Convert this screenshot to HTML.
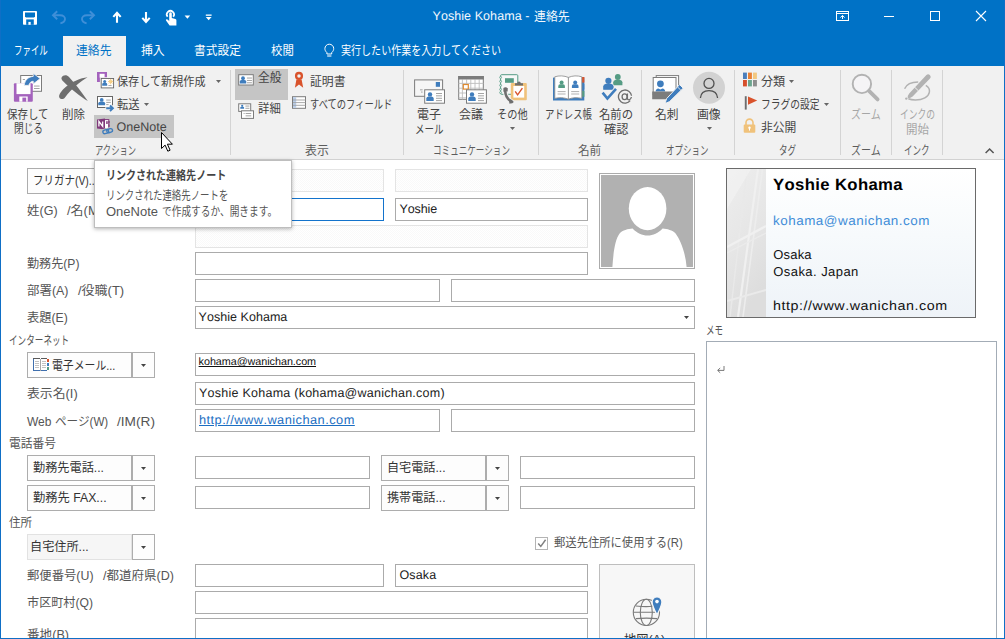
<!DOCTYPE html>
<html lang="ja"><head><meta charset="utf-8"><title>Yoshie Kohama - 連絡先</title>
<style>
html,body{margin:0;padding:0}
body{width:1005px;height:639px;overflow:hidden;position:relative;background:#fff;font-family:"Liberation Sans","Noto Sans CJK JP",sans-serif;color:#222}
.bx,.jt,.ic,.lt{position:absolute;box-sizing:border-box}
.jt,.ic{overflow:visible;display:block}
.jt text{font-family:"Liberation Sans","Noto Sans CJK JP",sans-serif;font-size:250px}
.lt{white-space:pre;line-height:1;transform-origin:0 50%;text-rendering:geometricPrecision;font-kerning:none}
.titlebar{background:#0072C6}
.tabsel{background:#F1F1F1}
.ribbon{background:#F1F1F1;border-bottom:1px solid #D2D2D2}
.sep{background:#D4D4D4}
.hot{background:#C5C5C5}
.fld{background:#fff;border:1px solid #ABABAB}
.fld.focus{border-color:#1373CC}
.fld.dis{border-color:#E4E4E4;background:repeating-conic-gradient(#FFFFFF 0 25%,#F9F9F9 0 50%) 0 0/2px 2px}
.btn{background:#FDFDFD;border:1px solid #ADADAD}
.btndis{background:#F6F6F6;border-color:#E2E2E2}
.mapbtn{background:#F7F7F7;border-color:#BEBEBE}
.photo{border:1px solid #ABABAB;background:#fff;padding:1px}
.photo svg{display:block}
.bcard{border:1px solid #6A6A6A;background:linear-gradient(180deg,#FFFFFF 0%,#F7FAFC 45%,#EEF3F8 100%)}
.memo{border:1px solid #A3ACB6;background:#fff}
.tip{background:#fff;border:1px solid #BEBEBE;box-shadow:0 1px 4px rgba(0,0,0,.30)}
.edge{background:#0F6FC6}
</style></head>
<body>
<header>
<div class="bx titlebar" style="left:0px;top:0px;width:1005px;height:66px;">
</div>
<svg class="ic" style="left:22px;top:10px" width="16" height="16" viewBox="22 10 16 16">
<rect x="23" y="10.9" width="14" height="13.8" rx=".8" fill="#fff"/>
<path d="M25 12.6 H35 V16.4 L34 17.5 H26 L25 16.4 Z" fill="#0072C6"/>
<rect x="26.2" y="19.4" width="7.6" height="5.4" fill="#0072C6"/>
<rect x="28.4" y="21.9" width="2.3" height="2.9" fill="#fff"/>
</svg>
<svg class="ic" style="left:51px;top:9px" width="16" height="16" viewBox="51 9 16 16">
<path d="M57.2 11.2 L53 15.2 L57.2 19.2" fill="none" stroke="#3F8FD8" stroke-width="1.9"/>
<path d="M53.4 15.2 H60 C63.4 15.2 65.2 17 65 19.2 C64.8 21.4 63.2 22.8 60.4 23.4" fill="none" stroke="#3F8FD8" stroke-width="1.9"/>
</svg>
<svg class="ic" style="left:80px;top:9px" width="16" height="16" viewBox="80 9 16 16">
<path d="M89.8 11.2 L94 15.2 L89.8 19.2" fill="none" stroke="#3F8FD8" stroke-width="1.9"/>
<path d="M93.6 15.2 H87 C83.6 15.2 81.8 17 82 19.2 C82.2 21.4 83.8 22.8 86.6 23.4" fill="none" stroke="#3F8FD8" stroke-width="1.9"/>
</svg>
<svg class="ic" style="left:111px;top:11px" width="12" height="13" viewBox="111 11 12 13">
<path d="M117 22.8 V13 M113.3 16.9 L117 12.9 L120.7 16.9" fill="none" stroke="#fff" stroke-width="2.1"/>
</svg>
<svg class="ic" style="left:140px;top:11px" width="12" height="13" viewBox="140 11 12 13">
<path d="M146 12 V21.8 M142.3 17.9 L146 21.9 L149.7 17.9" fill="none" stroke="#fff" stroke-width="2.1"/>
</svg>
<svg class="ic" style="left:164px;top:9px" width="14" height="17" viewBox="164 9 14 17">
<path d="M167.6 16.8 A3.6 3.6 0 1 1 173.2 16.8" fill="none" stroke="#fff" stroke-width="1.7"/>
<path d="M169.2 13.6 a1.3 1.3 0 0 1 2.6 0 V18 l3.6 .9 q1 .3 1 1.4 V25.4 H169.6 L166 20.6 q-.5-1 .6-1.3 q.9-.1 1.5 .6 l1.1 1.2 Z" fill="#fff"/>
</svg>
<svg class="ic" style="left:184px;top:15px" width="7" height="5" viewBox="184 15 7 5">
<path d="M184.6 15.6 h5.6 l-2.8 3.2 z" fill="#fff"/>
</svg>
<svg class="ic" style="left:205px;top:13px" width="8" height="8" viewBox="205 13 8 8">
<rect x="205.8" y="14.5" width="5.8" height="1.3" fill="#fff"/>
<path d="M205.8 17 h5.8 l-2.9 3.2 z" fill="#fff"/>
</svg>
<svg class="ic" style="left:835px;top:10px" width="15" height="12" viewBox="835 10 15 12">
<rect x="836.5" y="11.5" width="12" height="9" fill="none" stroke="#fff" stroke-width="1"/>
<path d="M836 13.5 H849 M842.5 19 V15.6 M840.4 17.6 L842.5 15.4 L844.6 17.6" fill="none" stroke="#fff" stroke-width="1"/>
</svg>
<svg class="ic" style="left:883px;top:15px" width="12" height="3" viewBox="883 15 12 3">
<rect x="884" y="16" width="10" height="1" fill="#fff"/>
</svg>
<svg class="ic" style="left:929px;top:10px" width="12" height="12" viewBox="929 10 12 12">
<rect x="930.5" y="11.5" width="9" height="9" fill="none" stroke="#fff" stroke-width="1"/>
</svg>
<svg class="ic" style="left:975px;top:10px" width="12" height="12" viewBox="975 10 12 12">
<path d="M976 11 L986 21 M986 11 L976 21" stroke="#fff" stroke-width="1.1"/>
</svg>
<svg class="ic" style="left:323px;top:42px" width="12" height="16" viewBox="323 42 12 16">
<path d="M326.9 52.6 C325.4 51.2 324.9 50 324.9 48.6 A4.4 4.4 0 0 1 333.7 48.6 C333.7 50 333.2 51.2 331.7 52.6 V54 H326.9 Z" fill="none" stroke="#fff" stroke-width="1"/>
<path d="M327.2 56 H331.4" stroke="#fff" stroke-width="1.1"/>
</svg>
<span class="lt" style="left:432.5px;top:10.2px;font-size:12.50px;color:#F3F8FD;letter-spacing:0.07px;">Yoshie Kohama -</span>
<svg class="jt" role="img" aria-label="連絡先" style="left:534.0px;top:8.8px" width="35.7" height="16.8" viewBox="0 -250.0 743.7 350.0" fill="#F3F8FD">
<title>連絡先</title>
<text x="0" y="0" textLength="743.7" lengthAdjust="spacingAndGlyphs">連絡先</text>
</svg>
<nav>
<div class="bx tabsel" style="left:63px;top:36px;width:63px;height:30px;">
</div>
<svg class="jt" role="img" aria-label="ファイル" style="left:13.8px;top:42.9px" width="33.8" height="16.8" viewBox="0 -250.0 704.2 350.0" fill="#fff">
<title>ファイル</title>
<text x="0" y="0" textLength="704.2" lengthAdjust="spacingAndGlyphs">ファイル</text>
</svg>
<svg class="jt" role="img" aria-label="連絡先" style="left:76.0px;top:42.9px" width="35.6" height="16.8" viewBox="0 -250.0 741.7 350.0" fill="#0072C6">
<title>連絡先</title>
<text x="0" y="0" textLength="741.7" lengthAdjust="spacingAndGlyphs">連絡先</text>
</svg>
<svg class="jt" role="img" aria-label="挿入" style="left:141.0px;top:42.9px" width="23.7" height="16.8" viewBox="0 -250.0 493.7 350.0" fill="#fff">
<title>挿入</title>
<text x="0" y="0" textLength="493.7" lengthAdjust="spacingAndGlyphs">挿入</text>
</svg>
<svg class="jt" role="img" aria-label="書式設定" style="left:194.3px;top:42.9px" width="46.9" height="16.8" viewBox="0 -250.0 977.1 350.0" fill="#fff">
<title>書式設定</title>
<text x="0" y="0" textLength="977.1" lengthAdjust="spacingAndGlyphs">書式設定</text>
</svg>
<svg class="jt" role="img" aria-label="校閲" style="left:271.2px;top:42.9px" width="22.8" height="16.8" viewBox="0 -250.0 475.0 350.0" fill="#fff">
<title>校閲</title>
<text x="0" y="0" textLength="475" lengthAdjust="spacingAndGlyphs">校閲</text>
</svg>
<svg class="jt" role="img" aria-label="実行したい作業を入力してください" style="left:341.0px;top:42.9px" width="160.0" height="16.8" viewBox="0 -250.0 3333.3 350.0" fill="#fff">
<title>実行したい作業を入力してください</title>
<text x="0" y="0" textLength="3333.3" lengthAdjust="spacingAndGlyphs">実行したい作業を入力してください</text>
</svg>
</nav>
</header>
<section class="ribbonwrap">
<div class="bx ribbon" style="left:0px;top:66px;width:1005px;height:94px;">
</div>
<div class="bx sep" style="left:230.1px;top:70px;width:1px;height:85px;">
</div>
<div class="bx sep" style="left:403px;top:70px;width:1px;height:85px;">
</div>
<div class="bx sep" style="left:538px;top:70px;width:1px;height:85px;">
</div>
<div class="bx sep" style="left:640.8px;top:70px;width:1px;height:85px;">
</div>
<div class="bx sep" style="left:734px;top:70px;width:1px;height:85px;">
</div>
<div class="bx sep" style="left:839.9px;top:70px;width:1px;height:85px;">
</div>
<div class="bx sep" style="left:890.8px;top:70px;width:1px;height:85px;">
</div>
<div class="bx sep" style="left:941.8px;top:70px;width:1px;height:85px;">
</div>
<div class="bx hot" style="left:94px;top:115px;width:80px;height:22.6px;">
</div>
<div class="bx hot" style="left:235.2px;top:69.3px;width:52.6px;height:30.4px;">
</div>
<svg class="ic" style="left:13px;top:73px" width="30" height="30" viewBox="13 73 30 30">
<rect x="20.7" y="75.5" width="20.8" height="15.8" fill="#fff" stroke="#7C7C7C" stroke-width="1"/>
<rect x="34" y="85.6" width="5.6" height=".9" fill="#9A9A9A"/>
<rect x="34" y="88" width="5.6" height=".9" fill="#9A9A9A"/>
<rect x="22.8" y="79" width="2.2" height=".9" fill="#9A9A9A"/>
<rect x="13.9" y="83.2" width="18.9" height="18.5" rx="1" fill="#A463BD"/>
<rect x="16.5" y="83.2" width="14" height="10.9" fill="#fff"/>
<rect x="19.3" y="96.5" width="8.4" height="5.2" fill="#fff"/>
<rect x="22.4" y="97.6" width="3.8" height="4.1" fill="#A463BD"/>
<path d="M24.2 85.4 C24.8 79.8 28.4 76.8 33.2 76.4 V73.2 L40.2 78.6 L33.2 84 V81.2 C31 81.4 29.4 82.8 28.8 85.4 Z" fill="#3F7DBD" stroke="#F1F1F1" stroke-width=".9"/>
</svg>
<svg class="ic" style="left:58px;top:74px" width="31" height="29" viewBox="58 74 31 29">
<path d="M61.6 77.6 C63 74.8 66.8 74.6 69 77 C74.6 83.2 81 91 87.8 101 C80 96.6 70.8 88.8 63.6 81.8 C62 80.4 61 79 61.6 77.6 Z" fill="#6E6E6E"/>
<path d="M87.6 77.2 C80.2 81.2 71.4 89 65 97.4 C63.4 99.6 59.8 99.6 59.2 97 C58.6 94.4 61.6 90.6 65.4 87.2 C72 81.6 80.4 78 87.6 77.2 Z" fill="#6E6E6E"/>
</svg>
<svg class="ic" style="left:96px;top:71px" width="19" height="18" viewBox="96 71 19 18">
<rect x="97" y="72" width="10" height="10" fill="#A463BD"/>
<rect x="99.6" y="73.8" width="5" height="3.8" fill="#fff"/>
<rect x="101.2" y="78.5" width="12.4" height="9.4" fill="#fff" stroke="#F1F1F1" stroke-width="2.6"/>
<rect x="101.2" y="78.5" width="12.4" height="9.4" fill="#fff" stroke="#666" stroke-width=".9"/>
<circle cx="104.7" cy="81.4" r="1.5" fill="#3F7DBD"/>
<path d="M102.2 85.625 V84.085 Q102.2 83.161 103.575 82.825 H105.825 Q107.2 83.161 107.2 84.085 V85.625 Z" fill="#3F7DBD"/>
<path d="M110.7 78.9 v5.4 M108 81.6 h5.4 M108.8 79.7 l3.8 3.8 M112.6 79.7 l-3.8 3.8" stroke="#F0B040" stroke-width=".65"/>
<circle cx="110.7" cy="81.6" r="1" fill="#F6D38A"/>
<rect x="108.4" y="85.2" width="3.2" height=".8" fill="#9A9A9A"/>
</svg>
<svg class="ic" style="left:96px;top:95px" width="19" height="18" viewBox="96 95 19 18">
<rect x="97.5" y="96.5" width="15" height="11" fill="#fff" stroke="#666" stroke-width="1"/>
<circle cx="101.7" cy="99.9" r="1.9" fill="#3F7DBD"/>
<path d="M98.3 105.305 V103.325 Q98.3 102.137 100.17 101.705 H103.23 Q105.1 102.137 105.1 103.325 V105.305 Z" fill="#3F7DBD"/>
<rect x="106.2" y="99.6" width="4.6" height=".9" fill="#9A9A9A"/>
<rect x="106.2" y="101.9" width="4.6" height=".9" fill="#9A9A9A"/>
<rect x="106.2" y="104.2" width="2.4" height=".9" fill="#9A9A9A"/>
<path d="M105.4 108.3 H112.6 M110 105.3 L113.1 108.3 L110 111.3" fill="none" stroke="#F1F1F1" stroke-width="3.6"/>
<path d="M106.2 108.3 H112.6 M110 105.5 L112.9 108.3 L110 111.1" fill="none" stroke="#3F7DBD" stroke-width="1.9"/>
</svg>
<svg class="ic" style="left:96px;top:117px" width="19" height="18" viewBox="96 117 19 18">
<rect x="104" y="119.6" width="4.8" height="9" fill="#fff" stroke="#80397B" stroke-width="1"/>
<rect x="106.2" y="121.2" width="1.5" height="2.8" fill="#80397B"/>
<rect x="108.4" y="121" width="1.2" height="2.4" fill="#80397B"/>
<rect x="108.4" y="124.4" width="1.2" height="2.4" fill="#80397B"/>
<path d="M97 119.6 L105 118.4 V129.6 L97 128.4 Z" fill="#80397B"/>
<path d="M98.9 126.4 V121.4 L102.7 126.4 V121.4" fill="none" stroke="#fff" stroke-width="1.25"/>
<g fill="none" stroke="#C5C5C5" stroke-width="3.2" transform="rotate(-14 107.6 131.2)">
<rect x="102.8" y="129.4" width="5.8" height="3.6" rx="1.8"/>
<rect x="106.8" y="129.4" width="5.8" height="3.6" rx="1.8"/>
</g>
<g fill="none" stroke="#3F7DBD" stroke-width="1.4" transform="rotate(-14 107.6 131.2)">
<rect x="102.8" y="129.4" width="5.8" height="3.6" rx="1.8"/>
<rect x="106.8" y="129.4" width="5.8" height="3.6" rx="1.8"/>
</g>
</svg>
<svg class="ic" style="left:237px;top:73px" width="18" height="14" viewBox="237 73 18 14">
<rect x="238.7" y="74.7" width="14.6" height="10.3" fill="#fff" stroke="#7C7C7C" stroke-width="1"/>
<circle cx="243" cy="78.268" r="1.9" fill="#3F7DBD"/>
<path d="M239.77 83.463 V81.5985 Q239.77 80.4798 241.547 80.073 H244.453 Q246.23 80.4798 246.23 81.5985 V83.463 Z" fill="#3F7DBD"/>
<rect x="246.936" y="77.59" width="4.992" height="0.9" fill="#9A9A9A"/>
<rect x="246.936" y="79.963" width="4.992" height="0.9" fill="#9A9A9A"/>
<rect x="246.936" y="82.336" width="4.992" height="0.9" fill="#9A9A9A"/>
</svg>
<svg class="ic" style="left:237px;top:102px" width="18" height="18" viewBox="237 102 18 18">
<rect x="238.7" y="103.8" width="12" height="7.6" fill="#fff" stroke="#7C7C7C" stroke-width="1"/>
<circle cx="242.2" cy="105.8" r="1.1" fill="#3F7DBD"/>
<path d="M240.3 108.845 V107.745 Q240.3 107.085 241.345 106.845 H243.055 Q244.1 107.085 244.1 107.745 V108.845 Z" fill="#3F7DBD"/>
<rect x="245.4" y="105.6" width="4" height=".9" fill="#9A9A9A"/>
<rect x="245.4" y="107.8" width="4" height=".9" fill="#9A9A9A"/>
<rect x="241.5" y="110.8" width="12" height="7.6" fill="#fff" stroke="#7C7C7C" stroke-width="1"/>
<rect x="243.6" y="113" width="1" height=".9" fill="#9A9A9A"/>
<rect x="245.6" y="113" width="5.6" height=".9" fill="#9A9A9A"/>
<rect x="245.6" y="115.4" width="5.6" height=".9" fill="#9A9A9A"/>
</svg>
<svg class="ic" style="left:293px;top:71px" width="12" height="18" viewBox="293 71 12 18">
<path d="M296.4 79.6 L294.9 87.8 L299 84.6 L303.2 87.8 L301.6 79.6 Z" fill="#D9532C"/>
<circle cx="299" cy="75.9" r="2.9" fill="#F1F1F1" stroke="#D9532C" stroke-width="2.3"/>
</svg>
<svg class="ic" style="left:291px;top:95px" width="16" height="15" viewBox="291 95 16 15">
<rect x="292.5" y="96.7" width="13" height="11.6" fill="#fff" stroke="#7C7C7C" stroke-width="1"/>
<rect x="293" y="97.2" width="3.2" height="10.6" fill="#B9CDE8"/>
<path d="M293 100 H305.5 M293 102.6 H305.5 M293 105.3 H305.5" stroke="#A0A0A0" stroke-width=".9"/>
</svg>
<svg class="ic" style="left:413px;top:78px" width="33" height="27" viewBox="413 78 33 27">
<rect x="414.6" y="79.9" width="28" height="16.4" fill="#F6F6F6" stroke="#7C7C7C" stroke-width="1"/>
<rect x="435.8" y="82" width="4.2" height="4.8" fill="#3F7DBD"/>
<rect x="420" y="89.4" width="2.6" height=".9" fill="#9A9A9A"/>
<rect x="421" y="91.6" width="1.6" height=".9" fill="#9A9A9A"/>
<rect x="424.7" y="89.8" width="19.8" height="13.4" fill="#fff" stroke="#7C7C7C" stroke-width="1"/>
<circle cx="430" cy="94.4" r="2.2" fill="#3F7DBD"/>
<path d="M426.3 100.89 V98.47 Q426.3 97.018 428.335 96.49 H431.665 Q433.7 97.018 433.7 98.47 V100.89 Z" fill="#3F7DBD"/>
<rect x="436" y="93" width="6" height=".9" fill="#9A9A9A"/>
<rect x="436" y="95.4" width="6" height=".9" fill="#9A9A9A"/>
<rect x="436" y="97.8" width="6" height=".9" fill="#9A9A9A"/>
<rect x="436" y="100.2" width="6" height=".9" fill="#9A9A9A"/>
</svg>
<svg class="ic" style="left:457px;top:75px" width="31" height="30" viewBox="457 75 31 30">
<rect x="458.7" y="76.5" width="24.6" height="22.8" fill="#fff" stroke="#7C7C7C" stroke-width="1"/>
<path d="M462.4 79.6 V99.4" stroke="#BDBDBD" stroke-width=".9"/>
<path d="M466.6 79.6 V99.4" stroke="#BDBDBD" stroke-width=".9"/>
<path d="M470.8 79.6 V99.4" stroke="#BDBDBD" stroke-width=".9"/>
<path d="M475 79.6 V99.4" stroke="#BDBDBD" stroke-width=".9"/>
<path d="M479.2 79.6 V99.4" stroke="#BDBDBD" stroke-width=".9"/>
<path d="M458.6 83.4 H483.4" stroke="#BDBDBD" stroke-width=".9"/>
<path d="M458.6 88.2 H483.4" stroke="#BDBDBD" stroke-width=".9"/>
<path d="M458.6 93 H483.4" stroke="#BDBDBD" stroke-width=".9"/>
<path d="M458.6 97.8 H483.4" stroke="#BDBDBD" stroke-width=".9"/>
<rect x="458.2" y="76" width="25.6" height="3.5" fill="#7C7C7C"/>
<rect x="463.3" y="84.5" width="5" height="4.6" fill="#fff" stroke="#E08A2E" stroke-width="1.2"/>
<rect x="466.5" y="89.8" width="19.9" height="13.4" fill="#fff" stroke="#7C7C7C" stroke-width="1"/>
<circle cx="472" cy="94.4" r="2.2" fill="#3F7DBD"/>
<path d="M468.3 100.89 V98.47 Q468.3 97.018 470.335 96.49 H473.665 Q475.7 97.018 475.7 98.47 V100.89 Z" fill="#3F7DBD"/>
<rect x="478" y="93" width="6" height=".9" fill="#9A9A9A"/>
<rect x="478" y="95.4" width="6" height=".9" fill="#9A9A9A"/>
<rect x="478" y="97.8" width="6" height=".9" fill="#9A9A9A"/>
<rect x="478" y="100.2" width="6" height=".9" fill="#9A9A9A"/>
</svg>
<svg class="ic" style="left:498px;top:73px" width="30" height="31" viewBox="498 73 30 31">
<rect x="500.6" y="74.7" width="17.2" height="19.6" rx="1" fill="#F8F8F8" stroke="#559C84" stroke-width="1"/>
<rect x="505" y="78.2" width="8.8" height="4.6" fill="#559C84"/>
<circle cx="500.6" cy="77.4" r="1" fill="#F1F1F1" stroke="#559C84" stroke-width=".7"/>
<circle cx="500.6" cy="81.4" r="1" fill="#F1F1F1" stroke="#559C84" stroke-width=".7"/>
<circle cx="500.6" cy="85.4" r="1" fill="#F1F1F1" stroke="#559C84" stroke-width=".7"/>
<circle cx="500.6" cy="89.4" r="1" fill="#F1F1F1" stroke="#559C84" stroke-width=".7"/>
<circle cx="500.6" cy="92.6" r="1" fill="#F1F1F1" stroke="#559C84" stroke-width=".7"/>
<rect x="510.8" y="82.9" width="16" height="17.4" rx="1" fill="#F0C27B"/>
<rect x="513.4" y="86" width="10.8" height="11.6" fill="#fff"/>
<path d="M515 85.4 V83.2 H517.2 A1.8 1.8 0 0 1 520.8 83.2 H523 V85.4 Z" fill="#6E6E6E"/>
<path d="M515.2 91.4 L517.6 94.8 L522.4 88.2" fill="none" stroke="#D9532C" stroke-width="1.4"/>
<path d="M505.4 89.4 C504.6 94.6 507.4 99.6 511.6 101.6" fill="none" stroke="#F1F1F1" stroke-width="4.6" stroke-linecap="round"/>
<path d="M505.4 89.4 C504.6 94.6 507.4 99.6 511.6 101.6" fill="none" stroke="#6E6E6E" stroke-width="2.6"/>
<path d="M503.4 88 Q505.6 86.6 507.8 88.2 L507.6 91.6 Q505.4 91 503.4 91.8 Z M509.6 99 Q512.4 99.6 513.8 102 Q512 104.2 509.2 103.4 Z" fill="#6E6E6E"/>
</svg>
<svg class="ic" style="left:552px;top:74px" width="34" height="28" viewBox="552 74 34 28">
<path d="M553 77.6 H584.3 V100.5 H553 Z" fill="#3F7DBD"/>
<rect x="581.6" y="77" width="2.8" height="5.6" fill="#D9532C"/>
<rect x="581.6" y="83.6" width="2.8" height="6" fill="#3F7DBD"/>
<rect x="581.6" y="90.8" width="2.8" height="6" fill="#559C84"/>
<path d="M554.8 76.8 C559 75.4 564 75.6 568.4 77.4 C572.6 75.6 577.4 75.4 581.8 76.8 V98.4 C577.4 97.2 572.6 97.4 568.4 99.2 C564 97.4 559 97.2 554.8 98.4 Z" fill="#fff" stroke="#8A8A8A" stroke-width=".8"/>
<path d="M568.4 77.4 V99.2" stroke="#8A8A8A" stroke-width=".9"/>
<circle cx="561.6" cy="82.4" r="2" fill="#559C84"/>
<path d="M558.3 87.9 V85.92 Q558.3 84.732 560.115 84.3 H563.085 Q564.9 84.732 564.9 85.92 V87.9 Z" fill="#559C84"/>
<circle cx="575.2" cy="82.4" r="2" fill="#3F7DBD"/>
<path d="M571.9 87.9 V85.92 Q571.9 84.732 573.715 84.3 H576.685 Q578.5 84.732 578.5 85.92 V87.9 Z" fill="#3F7DBD"/>
<path d="M557.6 91.6 H565.6 M557.6 94 H565.6 M571.2 91.6 H579.2 M571.2 94 H579.2" stroke="#A8A8A8" stroke-width=".9"/>
</svg>
<svg class="ic" style="left:601px;top:73px" width="33" height="32" viewBox="601 73 33 32">
<circle cx="617.8" cy="77" r="2.9" fill="#559C84"/>
<path d="M613.2 85.155 V82.185 Q613.2 80.403 615.73 79.755 H619.87 Q622.4 80.403 622.4 82.185 V85.155 Z" fill="#559C84"/>
<g stroke="#F1F1F1" stroke-width="1.2">
<circle cx="608.4" cy="80.8" r="3.1" fill="#3F7DBD"/>
<path d="M603.2 89.745 V86.445 Q603.2 84.465 606.06 83.745 H610.74 Q613.6 84.465 613.6 86.445 V89.745 Z" fill="#3F7DBD"/>
</g>
<circle cx="608.4" cy="80.8" r="3.1" fill="#3F7DBD"/>
<path d="M603.2 89.745 V86.445 Q603.2 84.465 606.06 83.745 H610.74 Q613.6 84.465 613.6 86.445 V89.745 Z" fill="#3F7DBD"/>
<path d="M602.4 92.4 L607.4 98.8 L616.2 88.6" fill="none" stroke="#F1F1F1" stroke-width="4.4"/>
<path d="M602.6 92.6 L607.4 98.6 L616 88.8" fill="none" stroke="#3F7DBD" stroke-width="2.6"/>
<circle cx="625" cy="96.6" r="6.6" fill="none" stroke="#6E6E6E" stroke-width="1.3" stroke-dasharray="36 5.5" transform="rotate(38 625 96.6)"/>
<ellipse cx="624.6" cy="96.8" rx="2.5" ry="2.9" fill="none" stroke="#6E6E6E" stroke-width="1.3"/>
<path d="M627.4 93.6 V98.4 Q627.6 100 629.2 99.8 Q631 99.2 631.4 97" fill="none" stroke="#6E6E6E" stroke-width="1.3"/>
</svg>
<svg class="ic" style="left:651px;top:74px" width="33" height="31" viewBox="651 74 33 31">
<rect x="656.2" y="75.6" width="22.4" height="16" fill="#fff" stroke="#7C7C7C" stroke-width="1"/>
<rect x="653.2" y="77.5" width="22.8" height="17" fill="#fff" stroke="#7C7C7C" stroke-width="1"/>
<circle cx="660.4" cy="83.8" r="3.4" fill="#3F7DBD"/>
<path d="M655.6 91.6 Q655.8 88.6 658.4 88.4 L660.4 89.6 L662.4 88.4 Q665 88.6 665.2 91.6 Z" fill="#3F7DBD"/>
<path d="M652.2 91.6 H676.4 L669.6 99.2 H652.2 Z" fill="#7C7C7C"/>
<path d="M679.6 84.6 L683.2 88.2 L669.6 101.6 L665 103.6 L666.6 98.6 Z" fill="#3F7DBD" stroke="#F1F1F1" stroke-width="1"/>
<path d="M677.6 87 L680.8 90.2" stroke="#F1F1F1" stroke-width=".9"/>
</svg>
<svg class="ic" style="left:692px;top:71px" width="34" height="34" viewBox="692 71 34 34">
<circle cx="709" cy="87.8" r="16" fill="#D2D2D2"/>
<circle cx="709" cy="83.4" r="5" fill="none" stroke="#505050" stroke-width="1.3"/>
<path d="M700.4 98 C700.8 93 704.6 90.6 709 90.6 C713.4 90.6 717.2 93 717.6 98" fill="none" stroke="#505050" stroke-width="1.3"/>
</svg>
<svg class="ic" style="left:742px;top:72px" width="16" height="16" viewBox="742 72 16 16">
<rect x="743" y="72.6" width="3.9" height="6.4" fill="#4A7EBB"/>
<rect x="748" y="72.6" width="3.9" height="6.4" fill="#E98034"/>
<rect x="753" y="72.6" width="3.9" height="6.4" fill="#F3C880"/>
<rect x="743" y="80" width="3.9" height="6.4" fill="#D6502C"/>
<rect x="748" y="80" width="3.9" height="6.4" fill="#6BA58D"/>
<rect x="753" y="80" width="3.9" height="6.4" fill="#8E8E8E"/>
</svg>
<svg class="ic" style="left:743px;top:95px" width="16" height="16" viewBox="743 95 16 16">
<rect x="744.8" y="96.2" width="1.9" height="13.4" fill="#6E6E6E"/>
<path d="M748 96.4 L757.2 100.6 L748 104.8 Z" fill="#D9532C"/>
</svg>
<svg class="ic" style="left:742px;top:118px" width="15" height="16" viewBox="742 118 15 16">
<path d="M746 125 V122.6 A3.5 3.5 0 0 1 753 122.6 V125" fill="none" stroke="#F0C27B" stroke-width="1.6"/>
<rect x="743.7" y="124.6" width="11.6" height="8.2" rx="1" fill="#F0C27B"/>
<circle cx="749.5" cy="127.8" r="1.2" fill="#fff"/>
<rect x="749" y="128" width="1" height="2.6" fill="#fff"/>
</svg>
<svg class="ic" style="left:850px;top:72px" width="30" height="30" viewBox="850 72 30 30">
<circle cx="861.9" cy="83.9" r="9.2" fill="#F5F4F6" stroke="#B2B2B2" stroke-width="1.9"/>
<path d="M869 90.8 L877.6 99.4" stroke="#B2B2B2" stroke-width="3.8" stroke-linecap="round"/>
</svg>
<svg class="ic" style="left:902px;top:72px" width="31" height="30" viewBox="902 72 31 30">
<path d="M904.6 88.8 C906.4 84.6 911.6 82 918.2 82 M925.8 85.4 C928.6 87 929.8 89.4 929.4 92 C928.6 97 922.8 100 915.4 100 C912.6 100 910.2 99.6 908.4 98.8" fill="none" stroke="#B2B2B2" stroke-width="1.5"/>
<path d="M926.4 75 Q928.2 73.4 930 75.2 Q931.6 77 930 78.6 L912.6 96.6 Q910.4 98.4 907.8 98.2 Q907.4 95.4 909.2 93.4 Z" fill="#B2B2B2"/>
<path d="M914.2 86.8 L918.4 90.8" stroke="#F1F1F1" stroke-width="1"/>
<circle cx="906.3" cy="98.6" r="1.2" fill="#B2B2B2"/>
</svg>
<svg class="ic" style="left:984px;top:147px" width="11" height="8" viewBox="984 147 11 8">
<path d="M985.6 153 L989.6 149 L993.6 153" fill="none" stroke="#555" stroke-width="1.5"/>
</svg>
<svg class="jt" role="img" aria-label="保存して" style="left:7.2px;top:107.1px" width="41.5" height="16.8" viewBox="0 -250.0 864.6 350.0" fill="#444">
<title>保存して</title>
<text x="0" y="0" textLength="864.6" lengthAdjust="spacingAndGlyphs">保存して</text>
</svg>
<svg class="jt" role="img" aria-label="閉じる" style="left:13.7px;top:121.1px" width="29.0" height="16.8" viewBox="0 -250.0 604.2 350.0" fill="#444">
<title>閉じる</title>
<text x="0" y="0" textLength="604.2" lengthAdjust="spacingAndGlyphs">閉じる</text>
</svg>
<svg class="jt" role="img" aria-label="削除" style="left:61.5px;top:107.1px" width="23.0" height="16.8" viewBox="0 -250.0 479.2 350.0" fill="#444">
<title>削除</title>
<text x="0" y="0" textLength="479.2" lengthAdjust="spacingAndGlyphs">削除</text>
</svg>
<svg class="jt" role="img" aria-label="保存して新規作成" style="left:116.5px;top:73.7px" width="88.5" height="16.8" viewBox="0 -250.0 1843.8 350.0" fill="#444">
<title>保存して新規作成</title>
<text x="0" y="0" textLength="1843.8" lengthAdjust="spacingAndGlyphs">保存して新規作成</text>
</svg>
<svg class="ic" style="left:215.1px;top:78.8px" width="7" height="5" viewBox="215.1 78.8 7 5">
<path d="M216.1 79.8 h5 l-2.5 3 z" fill="#666"/>
</svg>
<svg class="jt" role="img" aria-label="転送" style="left:116.5px;top:96.7px" width="22.6" height="16.8" viewBox="0 -250.0 470.8 350.0" fill="#444">
<title>転送</title>
<text x="0" y="0" textLength="470.8" lengthAdjust="spacingAndGlyphs">転送</text>
</svg>
<svg class="ic" style="left:142.9px;top:101.9px" width="7" height="5" viewBox="142.9 101.9 7 5">
<path d="M143.9 102.9 h5 l-2.5 3 z" fill="#666"/>
</svg>
<span class="lt" style="left:116.6px;top:121.4px;font-size:12.50px;color:#444;letter-spacing:-0.00px;">OneNote</span>
<svg class="jt" role="img" aria-label="アクション" style="left:94.5px;top:143.3px" width="41.0" height="16.8" viewBox="0 -250.0 854.2 350.0" fill="#5C5C5C">
<title>アクション</title>
<text x="0" y="0" textLength="854.2" lengthAdjust="spacingAndGlyphs">アクション</text>
</svg>
<svg class="jt" role="img" aria-label="全般" style="left:257.5px;top:70.3px" width="23.5" height="16.8" viewBox="0 -250.0 489.6 350.0" fill="#444">
<title>全般</title>
<text x="0" y="0" textLength="489.6" lengthAdjust="spacingAndGlyphs">全般</text>
</svg>
<svg class="jt" role="img" aria-label="詳細" style="left:257.7px;top:100.8px" width="22.8" height="16.8" viewBox="0 -250.0 475.0 350.0" fill="#444">
<title>詳細</title>
<text x="0" y="0" textLength="475" lengthAdjust="spacingAndGlyphs">詳細</text>
</svg>
<svg class="jt" role="img" aria-label="証明書" style="left:310.2px;top:73.8px" width="35.6" height="16.8" viewBox="0 -250.0 741.7 350.0" fill="#444">
<title>証明書</title>
<text x="0" y="0" textLength="741.7" lengthAdjust="spacingAndGlyphs">証明書</text>
</svg>
<svg class="jt" role="img" aria-label="すべてのフィールド" style="left:310.2px;top:97.1px" width="82.3" height="16.8" viewBox="0 -250.0 1714.6 350.0" fill="#444">
<title>すべてのフィールド</title>
<text x="0" y="0" textLength="1714.6" lengthAdjust="spacingAndGlyphs">すべてのフィールド</text>
</svg>
<svg class="jt" role="img" aria-label="表示" style="left:304.7px;top:143.3px" width="23.8" height="16.8" viewBox="0 -250.0 495.8 350.0" fill="#5C5C5C">
<title>表示</title>
<text x="0" y="0" textLength="495.8" lengthAdjust="spacingAndGlyphs">表示</text>
</svg>
<svg class="jt" role="img" aria-label="電子" style="left:416.9px;top:107.1px" width="23.9" height="16.8" viewBox="0 -250.0 497.9 350.0" fill="#444">
<title>電子</title>
<text x="0" y="0" textLength="497.9" lengthAdjust="spacingAndGlyphs">電子</text>
</svg>
<svg class="jt" role="img" aria-label="メール" style="left:414.7px;top:121.7px" width="28.5" height="16.8" viewBox="0 -250.0 593.7 350.0" fill="#444">
<title>メール</title>
<text x="0" y="0" textLength="593.7" lengthAdjust="spacingAndGlyphs">メール</text>
</svg>
<svg class="jt" role="img" aria-label="会議" style="left:459.2px;top:107.1px" width="23.8" height="16.8" viewBox="0 -250.0 495.8 350.0" fill="#444">
<title>会議</title>
<text x="0" y="0" textLength="495.8" lengthAdjust="spacingAndGlyphs">会議</text>
</svg>
<svg class="jt" role="img" aria-label="その他" style="left:497.2px;top:107.1px" width="30.6" height="16.8" viewBox="0 -250.0 637.5 350.0" fill="#444">
<title>その他</title>
<text x="0" y="0" textLength="637.5" lengthAdjust="spacingAndGlyphs">その他</text>
</svg>
<svg class="ic" style="left:508.9px;top:125.9px" width="7" height="5" viewBox="508.9 125.9 7 5">
<path d="M509.9 126.9 h5 l-2.5 3 z" fill="#666"/>
</svg>
<svg class="jt" role="img" aria-label="コミュニケーション" style="left:432.5px;top:143.3px" width="77.0" height="16.8" viewBox="0 -250.0 1604.2 350.0" fill="#5C5C5C">
<title>コミュニケーション</title>
<text x="0" y="0" textLength="1604.2" lengthAdjust="spacingAndGlyphs">コミュニケーション</text>
</svg>
<svg class="jt" role="img" aria-label="アドレス帳" style="left:545.0px;top:107.1px" width="47.0" height="16.8" viewBox="0 -250.0 979.2 350.0" fill="#444">
<title>アドレス帳</title>
<text x="0" y="0" textLength="979.2" lengthAdjust="spacingAndGlyphs">アドレス帳</text>
</svg>
<svg class="jt" role="img" aria-label="名前の" style="left:599.0px;top:107.1px" width="34.0" height="16.8" viewBox="0 -250.0 708.3 350.0" fill="#444">
<title>名前の</title>
<text x="0" y="0" textLength="708.3" lengthAdjust="spacingAndGlyphs">名前の</text>
</svg>
<svg class="jt" role="img" aria-label="確認" style="left:603.7px;top:121.7px" width="24.3" height="16.8" viewBox="0 -250.0 506.2 350.0" fill="#444">
<title>確認</title>
<text x="0" y="0" textLength="506.2" lengthAdjust="spacingAndGlyphs">確認</text>
</svg>
<svg class="jt" role="img" aria-label="名前" style="left:578.0px;top:143.3px" width="23.2" height="16.8" viewBox="0 -250.0 483.3 350.0" fill="#5C5C5C">
<title>名前</title>
<text x="0" y="0" textLength="483.3" lengthAdjust="spacingAndGlyphs">名前</text>
</svg>
<svg class="jt" role="img" aria-label="名刺" style="left:655.0px;top:107.1px" width="23.5" height="16.8" viewBox="0 -250.0 489.6 350.0" fill="#444">
<title>名刺</title>
<text x="0" y="0" textLength="489.6" lengthAdjust="spacingAndGlyphs">名刺</text>
</svg>
<svg class="jt" role="img" aria-label="画像" style="left:697.4px;top:107.1px" width="23.6" height="16.8" viewBox="0 -250.0 491.7 350.0" fill="#444">
<title>画像</title>
<text x="0" y="0" textLength="491.7" lengthAdjust="spacingAndGlyphs">画像</text>
</svg>
<svg class="ic" style="left:705.5px;top:125.9px" width="7" height="5" viewBox="705.5 125.9 7 5">
<path d="M706.5 126.9 h5 l-2.5 3 z" fill="#666"/>
</svg>
<svg class="jt" role="img" aria-label="オプション" style="left:666.0px;top:143.3px" width="42.6" height="16.8" viewBox="0 -250.0 887.5 350.0" fill="#5C5C5C">
<title>オプション</title>
<text x="0" y="0" textLength="887.5" lengthAdjust="spacingAndGlyphs">オプション</text>
</svg>
<svg class="jt" role="img" aria-label="分類" style="left:761.3px;top:73.7px" width="24.2" height="16.8" viewBox="0 -250.0 504.2 350.0" fill="#444">
<title>分類</title>
<text x="0" y="0" textLength="504.2" lengthAdjust="spacingAndGlyphs">分類</text>
</svg>
<svg class="ic" style="left:788.1px;top:78.8px" width="7" height="5" viewBox="788.1 78.8 7 5">
<path d="M789.1 79.8 h5 l-2.5 3 z" fill="#666"/>
</svg>
<svg class="jt" role="img" aria-label="フラグの設定" style="left:761.0px;top:96.7px" width="58.5" height="16.8" viewBox="0 -250.0 1218.8 350.0" fill="#444">
<title>フラグの設定</title>
<text x="0" y="0" textLength="1218.8" lengthAdjust="spacingAndGlyphs">フラグの設定</text>
</svg>
<svg class="ic" style="left:823.1px;top:101.9px" width="7" height="5" viewBox="823.1 101.9 7 5">
<path d="M824.1 102.9 h5 l-2.5 3 z" fill="#666"/>
</svg>
<svg class="jt" role="img" aria-label="非公開" style="left:761.0px;top:120.1px" width="35.4" height="16.8" viewBox="0 -250.0 737.5 350.0" fill="#444">
<title>非公開</title>
<text x="0" y="0" textLength="737.5" lengthAdjust="spacingAndGlyphs">非公開</text>
</svg>
<svg class="jt" role="img" aria-label="タグ" style="left:778.8px;top:143.3px" width="17.2" height="16.8" viewBox="0 -250.0 358.3 350.0" fill="#5C5C5C">
<title>タグ</title>
<text x="0" y="0" textLength="358.3" lengthAdjust="spacingAndGlyphs">タグ</text>
</svg>
<svg class="jt" role="img" aria-label="ズーム" style="left:851.2px;top:107.1px" width="29.6" height="16.8" viewBox="0 -250.0 616.7 350.0" fill="#A6A6A6">
<title>ズーム</title>
<text x="0" y="0" textLength="616.7" lengthAdjust="spacingAndGlyphs">ズーム</text>
</svg>
<svg class="jt" role="img" aria-label="ズーム" style="left:851.2px;top:143.3px" width="29.6" height="16.8" viewBox="0 -250.0 616.7 350.0" fill="#5C5C5C">
<title>ズーム</title>
<text x="0" y="0" textLength="616.7" lengthAdjust="spacingAndGlyphs">ズーム</text>
</svg>
<svg class="jt" role="img" aria-label="インクの" style="left:899.7px;top:107.1px" width="35.0" height="16.8" viewBox="0 -250.0 729.2 350.0" fill="#A6A6A6">
<title>インクの</title>
<text x="0" y="0" textLength="729.2" lengthAdjust="spacingAndGlyphs">インクの</text>
</svg>
<svg class="jt" role="img" aria-label="開始" style="left:905.6px;top:121.7px" width="23.0" height="16.8" viewBox="0 -250.0 479.2 350.0" fill="#A6A6A6">
<title>開始</title>
<text x="0" y="0" textLength="479.2" lengthAdjust="spacingAndGlyphs">開始</text>
</svg>
<svg class="jt" role="img" aria-label="インク" style="left:904.2px;top:143.3px" width="25.6" height="16.8" viewBox="0 -250.0 533.3 350.0" fill="#5C5C5C">
<title>インク</title>
<text x="0" y="0" textLength="533.3" lengthAdjust="spacingAndGlyphs">インク</text>
</svg>
</section>
<main>
<div class="bx btn" style="left:27px;top:168px;width:128px;height:26px;">
</div>
<svg class="jt" role="img" aria-label="フリガナ(V)..." style="left:33.0px;top:173.1px" width="64.6" height="16.8" viewBox="0 -250.0 1345.8 350.0" fill="#333">
<title>フリガナ(V)...</title>
<text x="0" y="0" textLength="1345.8" lengthAdjust="spacingAndGlyphs">フリガナ(V)...</text>
</svg>
<div class="bx fld dis" style="left:195px;top:169px;width:189px;height:23px;">
</div>
<div class="bx fld dis" style="left:395px;top:169px;width:193px;height:23px;">
</div>
<svg class="jt" role="img" aria-label="姓(G)" style="left:27.0px;top:202.5px" width="30.6" height="16.8" viewBox="0 -250.0 637.5 350.0" fill="#555">
<title>姓(G)</title>
<text x="0" y="0" textLength="637.5" lengthAdjust="spacingAndGlyphs">姓(G)</text>
</svg>
<svg class="jt" role="img" aria-label="/名(M)" style="left:67.2px;top:202.5px" width="36.0" height="16.8" viewBox="0 -250.0 750.0 350.0" fill="#555">
<title>/名(M)</title>
<text x="0" y="0" textLength="750" lengthAdjust="spacingAndGlyphs">/名(M)</text>
</svg>
<div class="bx fld focus" style="left:195px;top:198px;width:189px;height:23px;">
</div>
<div class="bx fld " style="left:395px;top:198px;width:193px;height:23px;">
</div>
<span class="lt" style="left:399.4px;top:203.0px;font-size:12.50px;color:#222;letter-spacing:-0.10px;">Yoshie</span>
<div class="bx fld dis" style="left:195px;top:225px;width:393px;height:23px;">
</div>
<svg class="jt" role="img" aria-label="勤務先(P)" style="left:27.0px;top:255.5px" width="52.5" height="16.8" viewBox="0 -250.0 1093.7 350.0" fill="#555">
<title>勤務先(P)</title>
<text x="0" y="0" textLength="1093.7" lengthAdjust="spacingAndGlyphs">勤務先(P)</text>
</svg>
<div class="bx fld " style="left:195px;top:252px;width:393px;height:23px;">
</div>
<svg class="jt" role="img" aria-label="部署(A)" style="left:27.0px;top:282.5px" width="41.5" height="16.8" viewBox="0 -250.0 864.6 350.0" fill="#555">
<title>部署(A)</title>
<text x="0" y="0" textLength="864.6" lengthAdjust="spacingAndGlyphs">部署(A)</text>
</svg>
<svg class="jt" role="img" aria-label="/役職(T)" style="left:78.2px;top:282.5px" width="46.2" height="16.8" viewBox="0 -250.0 962.5 350.0" fill="#555">
<title>/役職(T)</title>
<text x="0" y="0" textLength="962.5" lengthAdjust="spacingAndGlyphs">/役職(T)</text>
</svg>
<div class="bx fld " style="left:195px;top:279px;width:245px;height:23px;">
</div>
<div class="bx fld " style="left:451px;top:279px;width:244px;height:23px;">
</div>
<svg class="jt" role="img" aria-label="表題(E)" style="left:27.0px;top:309.9px" width="40.8" height="16.8" viewBox="0 -250.0 850.0 350.0" fill="#555">
<title>表題(E)</title>
<text x="0" y="0" textLength="850" lengthAdjust="spacingAndGlyphs">表題(E)</text>
</svg>
<div class="bx fld " style="left:195px;top:306px;width:500px;height:23px;">
</div>
<span class="lt" style="left:198.6px;top:310.8px;font-size:12.50px;color:#222;letter-spacing:0.04px;">Yoshie Kohama</span>
<svg class="ic" style="left:683px;top:315.1px" width="7" height="5" viewBox="683 315.1 7 5">
<path d="M684 316.1 h5 l-2.5 3 z" fill="#444"/>
</svg>
<div class="bx photo" style="left:599px;top:173px;width:96px;height:96px;">
<svg width="92" height="92" viewBox="601 175 92 92" aria-label="photo placeholder" role="img">
<rect x="601" y="175" width="92" height="92" fill="#B1B1B1"/>
<ellipse cx="647.6" cy="208.6" rx="18.8" ry="21.6" fill="#fff"/>
<path d="M612.4 267 C613.4 252 615 240 619.6 233.6 C622.6 230.2 628 229 632.6 228.6 C637 233.4 642 235.6 647.6 235.6 C653.2 235.6 658.2 233.4 662.6 228.6 C667.2 229 672.6 230.2 675.6 233.6 C680.2 240 685.4 252 686.6 267 Z" fill="#fff"/>
</svg>
</div>
<svg class="jt" role="img" aria-label="インターネット" style="left:8.8px;top:333.1px" width="60.2" height="16.8" viewBox="0 -250.0 1254.2 350.0" fill="#555">
<title>インターネット</title>
<text x="0" y="0" textLength="1254.2" lengthAdjust="spacingAndGlyphs">インターネット</text>
</svg>
<div class="bx btn" style="left:27px;top:352px;width:105px;height:26px;">
</div>
<div class="bx btn" style="left:132px;top:352px;width:23px;height:26px;">
</div>
<svg class="ic" style="left:139.8px;top:363.1px" width="7" height="5" viewBox="139.8 363.1 7 5">
<path d="M140.8 364.1 h5 l-2.5 3 z" fill="#444"/>
</svg>
<svg class="jt" role="img" aria-label="電子メール..." style="left:52.0px;top:358.1px" width="63.3" height="16.8" viewBox="0 -250.0 1318.8 350.0" fill="#333">
<title>電子メール...</title>
<text x="0" y="0" textLength="1318.8" lengthAdjust="spacingAndGlyphs">電子メール...</text>
</svg>
<div class="bx fld " style="left:195px;top:353px;width:500px;height:23px;">
</div>
<span class="lt" style="left:198.6px;top:357.1px;font-size:10.80px;color:#111;text-decoration:underline;letter-spacing:-0.05px;">kohama@wanichan.com</span>
<svg class="jt" role="img" aria-label="表示名(I)" style="left:27.0px;top:385.8px" width="50.7" height="16.8" viewBox="0 -250.0 1056.2 350.0" fill="#555">
<title>表示名(I)</title>
<text x="0" y="0" textLength="1056.2" lengthAdjust="spacingAndGlyphs">表示名(I)</text>
</svg>
<div class="bx fld " style="left:195px;top:382px;width:500px;height:23px;">
</div>
<span class="lt" style="left:199.0px;top:387.0px;font-size:12.50px;color:#222;letter-spacing:0.25px;">Yoshie Kohama (kohama@wanichan.com)</span>
<svg class="jt" role="img" aria-label="Web" style="left:27.0px;top:413.5px" width="24.5" height="16.8" viewBox="0 -250.0 510.4 350.0" fill="#555">
<title>Web</title>
<text x="0" y="0" textLength="510.4" lengthAdjust="spacingAndGlyphs">Web</text>
</svg>
<svg class="jt" role="img" aria-label="ページ(W)" style="left:54.6px;top:413.5px" width="53.2" height="16.8" viewBox="0 -250.0 1108.3 350.0" fill="#555">
<title>ページ(W)</title>
<text x="0" y="0" textLength="1108.3" lengthAdjust="spacingAndGlyphs">ページ(W)</text>
</svg>
<svg class="jt" role="img" aria-label="/IM(R)" style="left:116.6px;top:413.5px" width="38.0" height="16.8" viewBox="0 -250.0 791.7 350.0" fill="#555">
<title>/IM(R)</title>
<text x="0" y="0" textLength="791.7" lengthAdjust="spacingAndGlyphs">/IM(R)</text>
</svg>
<div class="bx fld " style="left:195px;top:409px;width:245px;height:23px;">
</div>
<div class="bx fld " style="left:451px;top:409px;width:244px;height:23px;">
</div>
<span class="lt" style="left:199.0px;top:413.6px;font-size:12.50px;color:#1B6EC2;text-decoration:underline;letter-spacing:0.45px;transform:scaleX(1.0245);">http://www.wanichan.com</span>
<svg class="jt" role="img" aria-label="電話番号" style="left:8.8px;top:435.9px" width="46.9" height="16.8" viewBox="0 -250.0 977.1 350.0" fill="#555">
<title>電話番号</title>
<text x="0" y="0" textLength="977.1" lengthAdjust="spacingAndGlyphs">電話番号</text>
</svg>
<div class="bx btn" style="left:27px;top:455px;width:105px;height:26px;">
</div>
<div class="bx btn" style="left:132px;top:455px;width:23px;height:26px;">
</div>
<svg class="ic" style="left:139.8px;top:466.1px" width="7" height="5" viewBox="139.8 466.1 7 5">
<path d="M140.8 467.1 h5 l-2.5 3 z" fill="#444"/>
</svg>
<svg class="jt" role="img" aria-label="勤務先電話..." style="left:33.0px;top:460.1px" width="71.0" height="16.8" viewBox="0 -250.0 1479.2 350.0" fill="#333">
<title>勤務先電話...</title>
<text x="0" y="0" textLength="1479.2" lengthAdjust="spacingAndGlyphs">勤務先電話...</text>
</svg>
<div class="bx fld " style="left:195px;top:456px;width:175px;height:23px;">
</div>
<div class="bx btn" style="left:381px;top:455px;width:105px;height:26px;">
</div>
<div class="bx btn" style="left:486px;top:455px;width:23px;height:26px;">
</div>
<svg class="ic" style="left:493.8px;top:466.1px" width="7" height="5" viewBox="493.8 466.1 7 5">
<path d="M494.8 467.1 h5 l-2.5 3 z" fill="#444"/>
</svg>
<svg class="jt" role="img" aria-label="自宅電話..." style="left:387.4px;top:460.1px" width="58.6" height="16.8" viewBox="0 -250.0 1220.8 350.0" fill="#333">
<title>自宅電話...</title>
<text x="0" y="0" textLength="1220.8" lengthAdjust="spacingAndGlyphs">自宅電話...</text>
</svg>
<div class="bx fld " style="left:520px;top:456px;width:175px;height:23px;">
</div>
<div class="bx btn" style="left:27px;top:485px;width:105px;height:26px;">
</div>
<div class="bx btn" style="left:132px;top:485px;width:23px;height:26px;">
</div>
<svg class="ic" style="left:139.8px;top:496.1px" width="7" height="5" viewBox="139.8 496.1 7 5">
<path d="M140.8 497.1 h5 l-2.5 3 z" fill="#444"/>
</svg>
<svg class="jt" role="img" aria-label="勤務先 FAX..." style="left:33.0px;top:490.1px" width="73.6" height="16.8" viewBox="0 -250.0 1533.3 350.0" fill="#333">
<title>勤務先 FAX...</title>
<text x="0" y="0" textLength="1533.3" lengthAdjust="spacingAndGlyphs">勤務先 FAX...</text>
</svg>
<div class="bx fld " style="left:195px;top:486px;width:175px;height:23px;">
</div>
<div class="bx btn" style="left:381px;top:485px;width:105px;height:26px;">
</div>
<div class="bx btn" style="left:486px;top:485px;width:23px;height:26px;">
</div>
<svg class="ic" style="left:493.8px;top:496.1px" width="7" height="5" viewBox="493.8 496.1 7 5">
<path d="M494.8 497.1 h5 l-2.5 3 z" fill="#444"/>
</svg>
<svg class="jt" role="img" aria-label="携帯電話..." style="left:387.4px;top:490.1px" width="58.6" height="16.8" viewBox="0 -250.0 1220.8 350.0" fill="#333">
<title>携帯電話...</title>
<text x="0" y="0" textLength="1220.8" lengthAdjust="spacingAndGlyphs">携帯電話...</text>
</svg>
<div class="bx fld " style="left:520px;top:486px;width:175px;height:23px;">
</div>
<svg class="jt" role="img" aria-label="住所" style="left:8.8px;top:514.5px" width="23.0" height="16.8" viewBox="0 -250.0 479.2 350.0" fill="#555">
<title>住所</title>
<text x="0" y="0" textLength="479.2" lengthAdjust="spacingAndGlyphs">住所</text>
</svg>
<div class="bx btn btndis" style="left:27px;top:534px;width:105px;height:26px;">
</div>
<div class="bx btn" style="left:132px;top:534px;width:23px;height:26px;">
</div>
<svg class="ic" style="left:139.8px;top:545.1px" width="7" height="5" viewBox="139.8 545.1 7 5">
<path d="M140.8 546.1 h5 l-2.5 3 z" fill="#444"/>
</svg>
<svg class="jt" role="img" aria-label="自宅住所..." style="left:29.6px;top:539.1px" width="58.7" height="16.8" viewBox="0 -250.0 1222.9 350.0" fill="#333">
<title>自宅住所...</title>
<text x="0" y="0" textLength="1222.9" lengthAdjust="spacingAndGlyphs">自宅住所...</text>
</svg>
<svg class="jt" role="img" aria-label="郵送先住所に使用する(R)" style="left:553.6px;top:534.9px" width="128.8" height="16.8" viewBox="0 -250.0 2683.3 350.0" fill="#555">
<title>郵送先住所に使用する(R)</title>
<text x="0" y="0" textLength="2683.3" lengthAdjust="spacingAndGlyphs">郵送先住所に使用する(R)</text>
</svg>
<svg class="jt" role="img" aria-label="郵便番号(U)" style="left:27.0px;top:568.0px" width="66.5" height="16.8" viewBox="0 -250.0 1385.4 350.0" fill="#555">
<title>郵便番号(U)</title>
<text x="0" y="0" textLength="1385.4" lengthAdjust="spacingAndGlyphs">郵便番号(U)</text>
</svg>
<svg class="jt" role="img" aria-label="/都道府県(D)" style="left:103.3px;top:568.0px" width="71.0" height="16.8" viewBox="0 -250.0 1479.2 350.0" fill="#555">
<title>/都道府県(D)</title>
<text x="0" y="0" textLength="1479.2" lengthAdjust="spacingAndGlyphs">/都道府県(D)</text>
</svg>
<div class="bx fld " style="left:195px;top:564px;width:189px;height:23px;">
</div>
<div class="bx fld " style="left:395px;top:564px;width:193px;height:23px;">
</div>
<span class="lt" style="left:399.4px;top:569.4px;font-size:12.50px;color:#222;letter-spacing:0.17px;">Osaka</span>
<svg class="jt" role="img" aria-label="市区町村(Q)" style="left:27.0px;top:594.8px" width="66.0" height="16.8" viewBox="0 -250.0 1375.0 350.0" fill="#555">
<title>市区町村(Q)</title>
<text x="0" y="0" textLength="1375" lengthAdjust="spacingAndGlyphs">市区町村(Q)</text>
</svg>
<div class="bx fld " style="left:195px;top:591px;width:393px;height:23px;">
</div>
<svg class="jt" role="img" aria-label="番地(B)" style="left:27.0px;top:626.5px" width="42.0" height="16.8" viewBox="0 -250.0 875.0 350.0" fill="#555">
<title>番地(B)</title>
<text x="0" y="0" textLength="875" lengthAdjust="spacingAndGlyphs">番地(B)</text>
</svg>
<div class="bx fld " style="left:195px;top:618px;width:393px;height:23px;">
</div>
<div class="bx btn mapbtn" style="left:599px;top:564px;width:96px;height:96px;">
</div>
<svg class="jt" role="img" aria-label="地図(A)" style="left:624.0px;top:632.3px" width="41.0" height="16.8" viewBox="0 -250.0 854.2 350.0" fill="#333">
<title>地図(A)</title>
<text x="0" y="0" textLength="854.2" lengthAdjust="spacingAndGlyphs">地図(A)</text>
</svg>
<div class="bx bcard" style="left:726px;top:168px;width:250px;height:150px;">
<svg class="bx" style="left:0;top:0" width="39" height="148" viewBox="0 0 39 148" aria-hidden="true">
<defs>
<linearGradient id="cg" x1="0" y1="0" x2="0.35" y2="1">
<stop offset="0" stop-color="#EEEEEE"/>
<stop offset=".55" stop-color="#E6E6E6"/>
<stop offset="1" stop-color="#DDDDDD"/>
</linearGradient>
</defs>
<rect width="39" height="148" fill="url(#cg)"/>
<g fill="none">
<path d="M31 0 L11 148" stroke="#F0F0F0" stroke-width="2.2"/>
<path d="M35.5 0 L16 148" stroke="#EDEDED" stroke-width="1.6"/>
<path d="M20 0 L3 148" stroke="#E9E9E9" stroke-width="1.4"/>
<path d="M0 78 L39 57" stroke="#F0F0F0" stroke-width="2.4"/>
<path d="M0 84 L39 64" stroke="#EBEBEB" stroke-width="1.2"/>
<path d="M0 132 L39 121" stroke="#EAEAEA" stroke-width="2"/>
</g>
<path d="M0 0 H24 L0 40 Z" fill="#F3F3F3" opacity=".6"/>
</svg>
</div>
<span class="lt" style="left:773.2px;top:177.3px;font-size:16.40px;color:#000;font-weight:bold;letter-spacing:0.35px;transform:scaleX(1.0190);">Yoshie Kohama</span>
<span class="lt" style="left:773.2px;top:214.2px;font-size:13.00px;color:#3F8DD8;letter-spacing:0.50px;transform:scaleX(1.0326);">kohama@wanichan.com</span>
<span class="lt" style="left:773.2px;top:248.0px;font-size:13.00px;color:#111;letter-spacing:0.21px;">Osaka</span>
<span class="lt" style="left:773.2px;top:264.6px;font-size:13.00px;color:#111;letter-spacing:0.45px;">Osaka. Japan</span>
<span class="lt" style="left:773.2px;top:298.9px;font-size:13.00px;color:#111;letter-spacing:0.50px;transform:scaleX(1.0989);">http://www.wanichan.com</span>
<svg class="jt" role="img" aria-label="メモ" style="left:706.3px;top:322.9px" width="17.0" height="16.8" viewBox="0 -250.0 354.2 350.0" fill="#555">
<title>メモ</title>
<text x="0" y="0" textLength="354.2" lengthAdjust="spacingAndGlyphs">メモ</text>
</svg>
<div class="bx memo" style="left:706px;top:341px;width:291px;height:319px;">
</div>
<svg class="ic" style="left:32px;top:357px" width="18" height="15" viewBox="32 357 18 15">
<rect x="33" y="358" width="7" height="13" fill="#fff"/>
<rect x="41" y="358" width="6" height="13" fill="#fff"/>
<rect x="33" y="358" width="7" height="1" fill="#5A5A5A"/>
<rect x="41" y="358" width="6" height="1" fill="#5A5A5A"/>
<rect x="33" y="359" width="1" height="12" fill="#3F6FAE"/>
<rect x="33" y="370" width="7" height="1" fill="#3F6FAE"/>
<rect x="41" y="370" width="6" height="1" fill="#3F6FAE"/>
<rect x="40" y="359" width="1" height="12" fill="#A8A8A8"/>
<rect x="35" y="361" width="4" height="1" fill="#C2C2C2"/>
<rect x="42" y="361" width="4" height="1" fill="#C2C2C2"/>
<rect x="35" y="363" width="4" height="1" fill="#C2C2C2"/>
<rect x="42" y="363" width="4" height="1" fill="#C2C2C2"/>
<rect x="35" y="365" width="4" height="1" fill="#C2C2C2"/>
<rect x="42" y="365" width="4" height="1" fill="#C2C2C2"/>
<rect x="35" y="367" width="4" height="1" fill="#C2C2C2"/>
<rect x="42" y="367" width="4" height="1" fill="#C2C2C2"/>
<rect x="47" y="359" width="2" height="3" fill="#D9532C"/>
<rect x="47" y="363" width="2" height="3" fill="#3F7DBD"/>
<rect x="47" y="367" width="2" height="3" fill="#559C84"/>
</svg>
<svg class="ic" style="left:535px;top:537px" width="13" height="13" viewBox="535 537 13 13">
<rect x="535.5" y="537.5" width="12" height="12" fill="#fff" stroke="#B4B4B4" stroke-width="1"/>
<path d="M538.2 543.4 L540.8 546.4 L545.6 539.8" fill="none" stroke="#808080" stroke-width="1.5"/>
</svg>
<svg class="ic" style="left:631px;top:595px" width="34" height="33" viewBox="631 595 34 33">
<g fill="none" stroke="#7A7A7A" stroke-width="1.1">
<circle cx="646.4" cy="612.4" r="13.1"/>
<ellipse cx="646.3" cy="612.4" rx="6" ry="13.1"/>
<path d="M633.4 612.3 H655 M636 606 Q646.4 607.2 652.6 606.2 M636 618.6 Q646.4 617.6 657 618.6"/>
</g>
<path d="M657 597 a4.9 4.9 0 0 1 4.9 4.9 c0 3.4-4.9 12.8-4.9 12.8 s-4.9-9.4-4.9-12.8 a4.9 4.9 0 0 1 4.9-4.9 z" fill="#3F7DBD" stroke="#F7F7F7" stroke-width="1.2"/>
<circle cx="657" cy="601.6" r="1.8" fill="#fff"/>
</svg>
<svg class="ic" style="left:716px;top:364px" width="10" height="10" viewBox="716 364 10 10">
<path d="M724 366 V370.4 H718 M720.2 368 L717.6 370.4 L720.2 372.8" fill="none" stroke="#6A6A6A" stroke-width=".9"/>
</svg>
</main>
<aside class="bx tip" style="left:94.4px;top:160.4px;width:197.2px;height:67.4px;">
</aside>
<svg class="jt" role="img" aria-label="リンクされた連絡先ノート" style="left:106.0px;top:168.1px" width="120.2" height="16.8" viewBox="0 -250.0 2504.2 350.0" fill="#444">
<title>リンクされた連絡先ノート</title>
<text x="0" y="0" font-weight="bold" textLength="2504.2" lengthAdjust="spacingAndGlyphs">リンクされた連絡先ノート</text>
</svg>
<svg class="jt" role="img" aria-label="リンクされた連絡先ノートを" style="left:106.0px;top:188.3px" width="122.3" height="16.8" viewBox="0 -250.0 2547.9 350.0" fill="#555">
<title>リンクされた連絡先ノートを</title>
<text x="0" y="0" textLength="2547.9" lengthAdjust="spacingAndGlyphs">リンクされた連絡先ノートを</text>
</svg>
<svg class="jt" role="img" aria-label="OneNote" style="left:106.0px;top:203.7px" width="52.0" height="16.8" viewBox="0 -250.0 1083.3 350.0" fill="#555">
<title>OneNote</title>
<text x="0" y="0" textLength="1083.3" lengthAdjust="spacingAndGlyphs">OneNote</text>
</svg>
<svg class="jt" role="img" aria-label="で作成するか、開きます。" style="left:161.6px;top:203.7px" width="115.2" height="16.8" viewBox="0 -250.0 2400.0 350.0" fill="#555">
<title>で作成するか、開きます。</title>
<text x="0" y="0" textLength="2400" lengthAdjust="spacingAndGlyphs">で作成するか、開きます。</text>
</svg>
<svg class="ic" style="left:160px;top:131px" width="14" height="22" viewBox="160 131 14 22">
<path d="M161.5 132.5 v16 l3.6-3.4 l2.7 6.1 l2.3-1 l-2.7-6 h5 z" fill="#fff" stroke="#000" stroke-width="1" stroke-linejoin="miter"/>
</svg>
<div class="bx edge" style="left:0px;top:0px;width:1px;height:639px;">
</div>
<div class="bx edge" style="left:1004px;top:0px;width:1px;height:639px;">
</div>
<div class="bx edge" style="left:0px;top:638px;width:1005px;height:1px;">
</div>
</body></html>
